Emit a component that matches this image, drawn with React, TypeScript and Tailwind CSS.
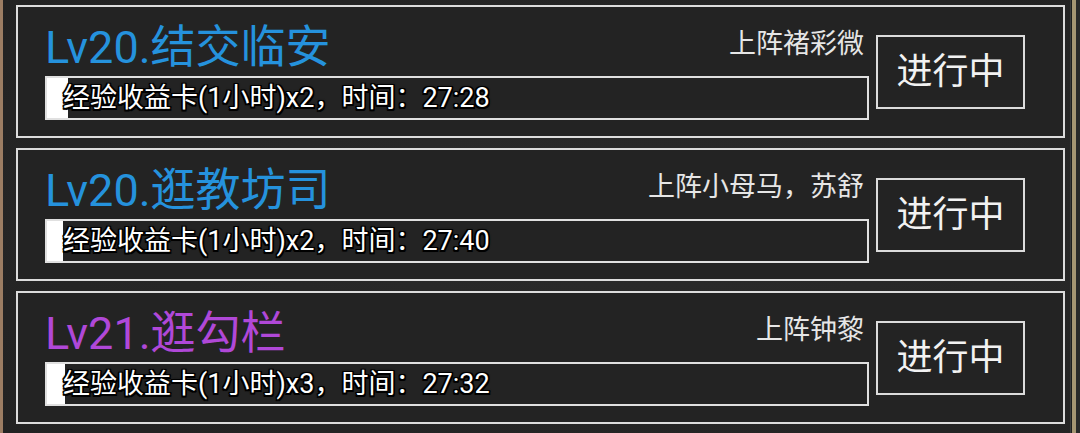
import React from "react";

type Item = {
  title: string;
  color: string;
  label: string;
  text: string;
  fill: number;
};

const items: Item[] = [
  { title: "Lv20.结交临安", color: "text-[#2592dd]", label: "上阵褚彩微", text: "经验收益卡(1小时)x2，时间：27:28", fill: 21 },
  { title: "Lv20.逛教坊司", color: "text-[#2592dd]", label: "上阵小母马，苏舒", text: "经验收益卡(1小时)x2，时间：27:40", fill: 16 },
  { title: "Lv21.逛勾栏", color: "text-[#b048d8]", label: "上阵钟黎", text: "经验收益卡(1小时)x3，时间：27:32", fill: 18 },
];

function Card({ item }: { item: Item }) {
  return (
    <div className="h-[133px] border-2 border-[#dcdcdc] bg-[#232323] flex items-center pl-[27px] pr-[38px]">
      <div className="flex-1 flex flex-col">
        <div className="h-[44px] flex items-center justify-between">
          <span className={`text-[45px] leading-none mt-[4px] ${item.color}`}>{item.title}</span>
          <span className="text-[27px] leading-none text-[#e6e6e6] pr-[5px] self-start mt-[8px]">{item.label}</span>
        </div>
        <div className="mt-[9px] h-[44px] border-2 border-[#e0e0e0] relative flex items-center">
          <div className="absolute left-0 top-0 bottom-0 bg-white" style={{ width: item.fill }} />
          <span className="relative ml-[16px] text-[27px] leading-none text-white [text-shadow:-1.5px_-1.5px_0_#000,1.5px_-1.5px_0_#000,-1.5px_1.5px_0_#000,1.5px_1.5px_0_#000,0_-1.5px_0_#000,0_1.5px_0_#000,-1.5px_0_0_#000,1.5px_0_0_#000,0_0_3px_#000]">
            {item.text}
          </span>
        </div>
      </div>
      <div className="ml-[7px] w-[149px] h-[74px] border-2 border-[#dcdcdc] flex items-center justify-center text-[36px] leading-none text-[#f2f2f2]">
        进行中
      </div>
    </div>
  );
}

export default function App() {
  return (
    <div
      className="w-[1080px] h-[433px] flex bg-[#252525] overflow-hidden"
      style={{ fontFamily: "Roboto, 'Noto Sans CJK SC', sans-serif" }}
    >
      <div className="w-[3px] bg-[#9c7d63]" />
      <div className="flex-1 flex flex-col gap-[10px] pt-[5px] pl-[13px] pr-[5px] bg-[radial-gradient(ellipse_at_60%_50%,#2b2b2b,#222222)]">
        {items.map((it, i) => (
          <Card key={i} item={it} />
        ))}
      </div>
      <div className="w-[1px] bg-[#3a3a3a]" />
      <div className="w-[1px] bg-[#1e1e1e]" />
      <div className="w-[4px] bg-[#a69673]" />
      <div className="w-[4px] bg-[#2a2a2a]" />
    </div>
  );
}
